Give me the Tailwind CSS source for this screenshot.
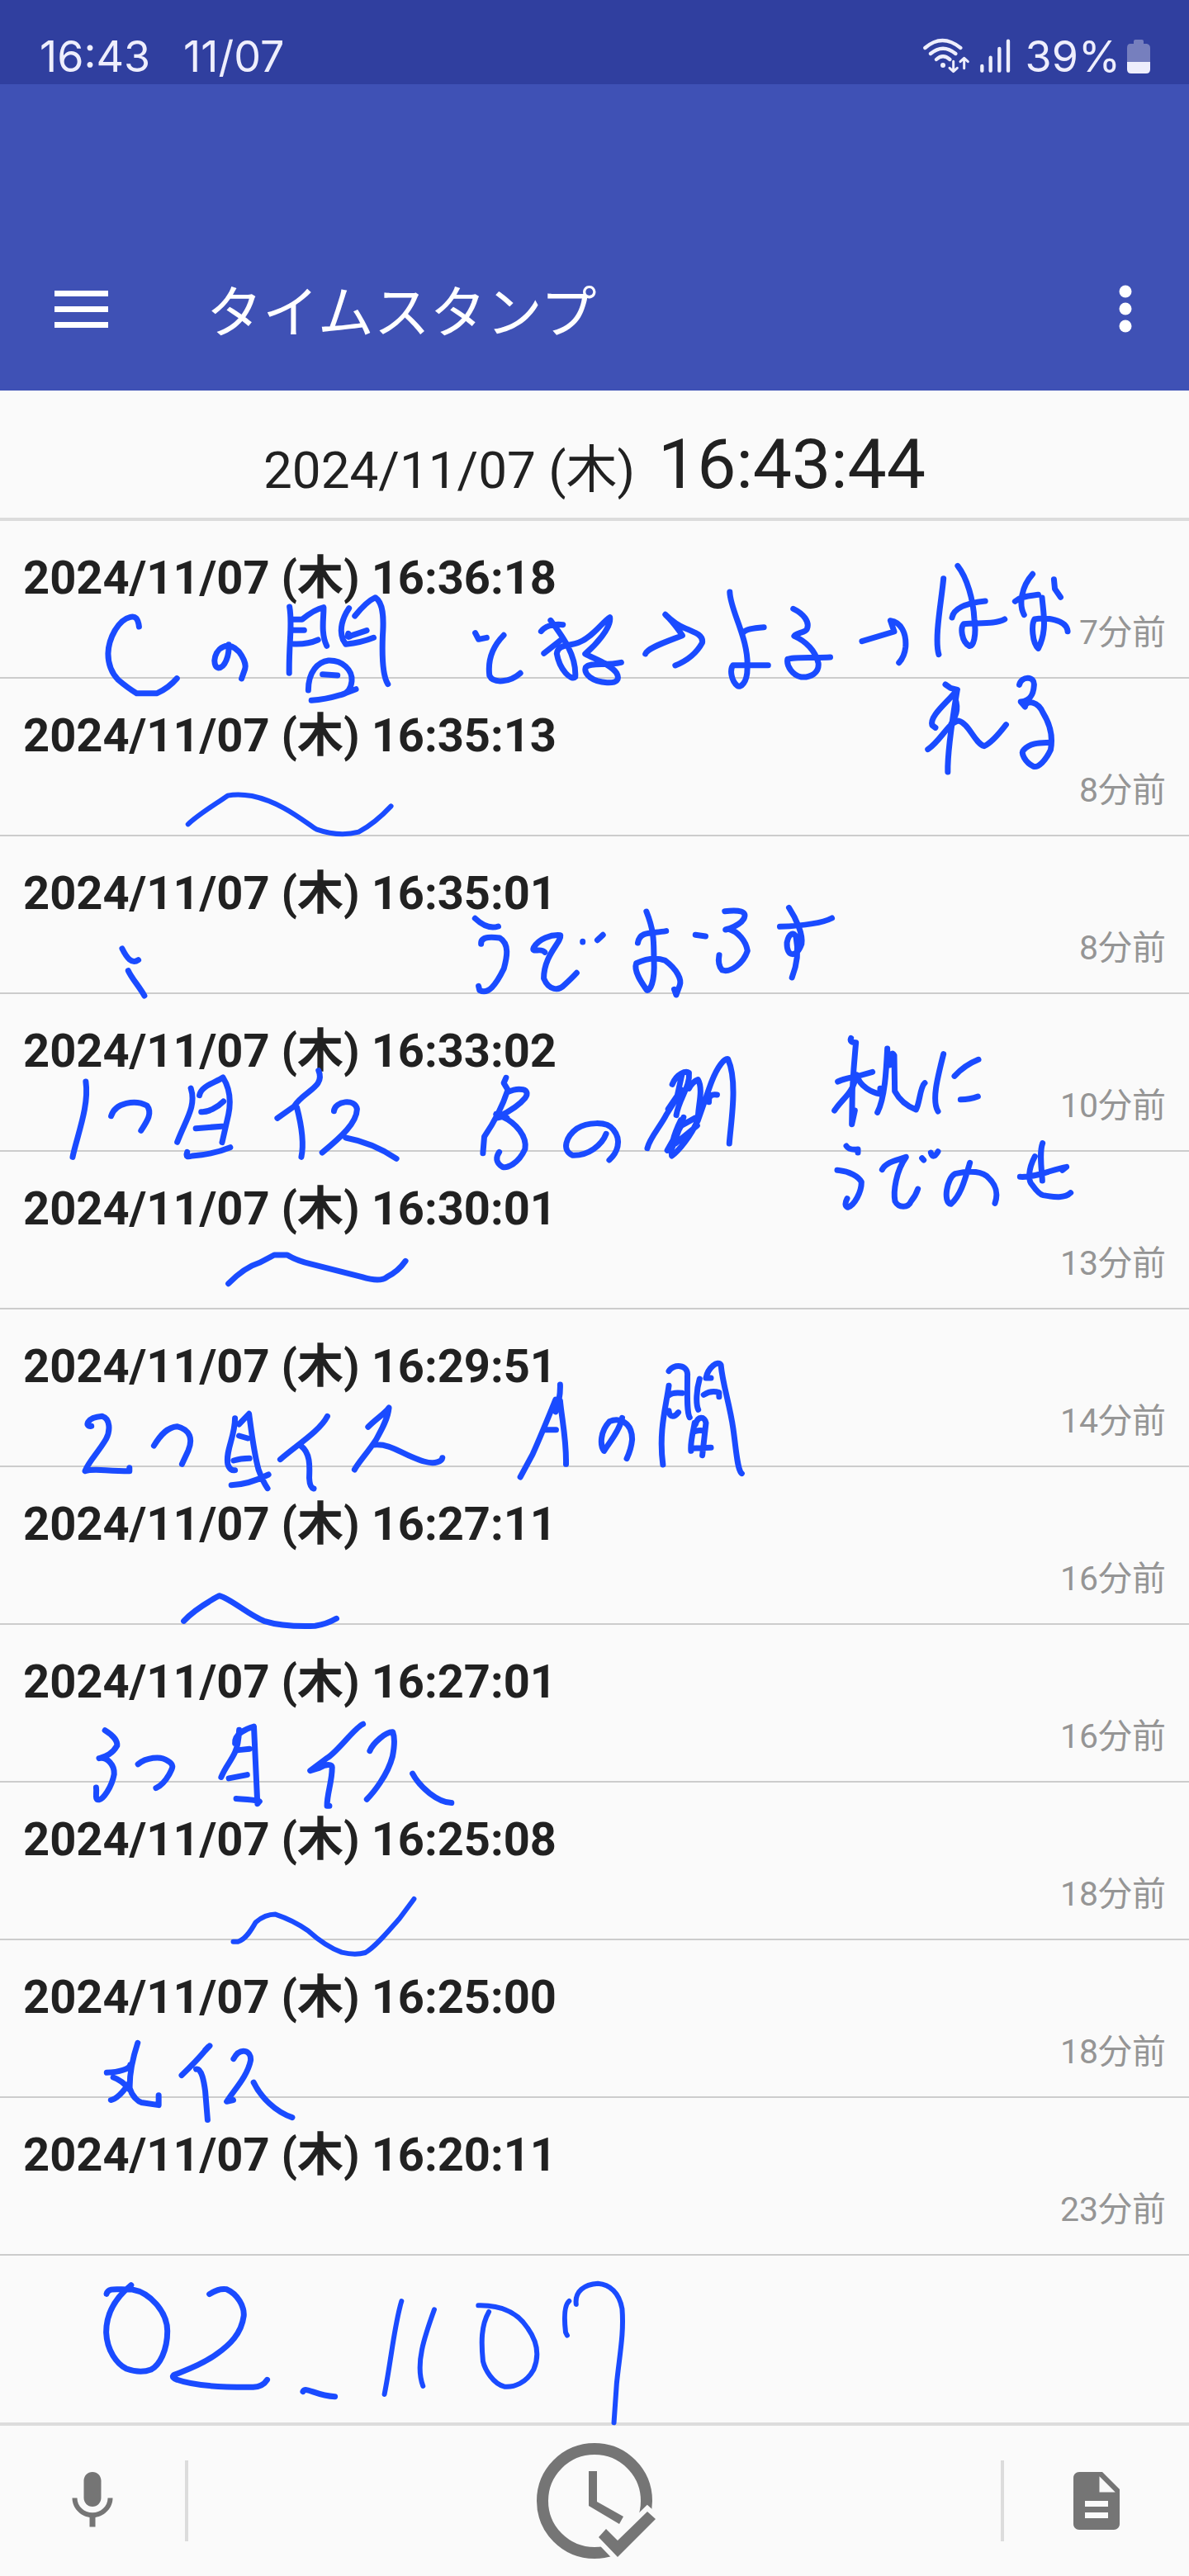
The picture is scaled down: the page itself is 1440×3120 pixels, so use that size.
<!DOCTYPE html>
<html lang="ja">
<head>
<meta charset="utf-8">
<meta name="viewport" content="width=device-width, initial-scale=1">
<title>タイムスタンプ</title>
<script src="https://cdn.jsdelivr.net/npm/@tailwindcss/browser@4"></script>
</head>
<body class="flex min-h-screen flex-col bg-[#fafafa] font-['Roboto','Noto_Sans_CJK_JP',sans-serif] text-[#212121]">

<!-- Status bar -->
<div class="flex h-[102px] items-end justify-between bg-[#303f9f] pr-[47px] pl-12 font-['Inter',sans-serif] text-[52px] leading-[66px] text-[#eeeefc]">
  <div class="flex gap-10"><span>16:43</span><span>11/07</span></div>
  <div class="flex items-end gap-4">
    <svg class="mb-3 h-[45px] w-[110px]" viewBox="105 75 330 135" fill="none" stroke="currentColor" stroke-linecap="round" stroke-linejoin="round" aria-hidden="true">
      <path stroke-width="13" d="M118 114Q180 60 247 114M138 135Q183 97 229 135M159 156Q183 134 208 156"/>
      <circle cx="183" cy="177" r="9" fill="currentColor" stroke="none"/>
      <path stroke-width="9" d="M221 163V199M207 187L221 200L235 187M260 188V152M246 164L260 151L274 164"/>
      <path stroke-width="13" d="M325 180V197M356 149V197M388 117V197M420 89V197"/>
    </svg>
    <span class="flex items-end gap-2"><span>39%</span>
    <svg class="mb-[13px] h-[42px] w-7" viewBox="0 0 28 42" aria-hidden="true">
      <path fill="#767fbe" d="M8 6V3Q8 1 10 1H18Q20 1 20 3V6H24Q28 7 28 11V29H0V11Q0 6 4 6Z"/>
      <path fill="#eeeefc" d="M0 28H28V37Q28 42 23 42H5Q0 42 0 37Z"/>
    </svg></span>
  </div>
</div>

<!-- App bar -->
<header class="flex h-[371px] items-end bg-[#3f51b5] text-white">
  <div class="flex h-[198px] w-full items-center pr-[49px] pl-14">
    <button type="button" aria-label="メニュー" class="flex h-[84px] w-[84px] items-center justify-center">
      <svg class="h-[45px] w-[65px]" viewBox="0 0 65 45" fill="currentColor"><path d="M0 0H65V7H0ZM0 19H65V26H0ZM0 38H65V45H0Z"/></svg>
    </button>
    <h1 class="ml-[110px] flex-1 pt-3 text-[68px] leading-[96px]">タイムスタンプ</h1>
    <button type="button" aria-label="その他" class="flex h-[84px] w-14 items-center justify-center">
      <svg class="h-[58px] w-4" viewBox="0 0 16 58" fill="currentColor"><circle cx="8" cy="8" r="7.5"/><circle cx="8" cy="29" r="7.5"/><circle cx="8" cy="50" r="7.5"/></svg>
    </button>
  </div>
</header>

<!-- Current time -->
<div class="flex h-[158px] items-baseline justify-center gap-7 border-b-4 border-[#dcdcdc] pt-[34px]">
  <span class="text-[62px] leading-[100px]">2024/11/07 (木)</span>
  <span class="text-[84px] leading-[112px]">16:43:44</span>
</div>

<!-- Time stamps -->
<main class="relative flex-1">
  <ul>
    <li class="border-b-2 border-[#cccccc] px-7 pt-[29px] pb-7"><p class="text-[56px] leading-[80px] font-bold">2024/11/07 (木) 16:36:18</p><p class="text-right text-[41px] leading-[52px] text-[#959595]">7分前</p></li>
    <li class="border-b-2 border-[#cccccc] px-7 pt-[29px] pb-7"><p class="text-[56px] leading-[80px] font-bold">2024/11/07 (木) 16:35:13</p><p class="text-right text-[41px] leading-[52px] text-[#959595]">8分前</p></li>
    <li class="border-b-2 border-[#cccccc] px-7 pt-[29px] pb-7"><p class="text-[56px] leading-[80px] font-bold">2024/11/07 (木) 16:35:01</p><p class="text-right text-[41px] leading-[52px] text-[#959595]">8分前</p></li>
    <li class="border-b-2 border-[#cccccc] px-7 pt-[29px] pb-7"><p class="text-[56px] leading-[80px] font-bold">2024/11/07 (木) 16:33:02</p><p class="text-right text-[41px] leading-[52px] text-[#959595]">10分前</p></li>
    <li class="border-b-2 border-[#cccccc] px-7 pt-[29px] pb-7"><p class="text-[56px] leading-[80px] font-bold">2024/11/07 (木) 16:30:01</p><p class="text-right text-[41px] leading-[52px] text-[#959595]">13分前</p></li>
    <li class="border-b-2 border-[#cccccc] px-7 pt-[29px] pb-7"><p class="text-[56px] leading-[80px] font-bold">2024/11/07 (木) 16:29:51</p><p class="text-right text-[41px] leading-[52px] text-[#959595]">14分前</p></li>
    <li class="border-b-2 border-[#cccccc] px-7 pt-[29px] pb-7"><p class="text-[56px] leading-[80px] font-bold">2024/11/07 (木) 16:27:11</p><p class="text-right text-[41px] leading-[52px] text-[#959595]">16分前</p></li>
    <li class="border-b-2 border-[#cccccc] px-7 pt-[29px] pb-7"><p class="text-[56px] leading-[80px] font-bold">2024/11/07 (木) 16:27:01</p><p class="text-right text-[41px] leading-[52px] text-[#959595]">16分前</p></li>
    <li class="border-b-2 border-[#cccccc] px-7 pt-[29px] pb-7"><p class="text-[56px] leading-[80px] font-bold">2024/11/07 (木) 16:25:08</p><p class="text-right text-[41px] leading-[52px] text-[#959595]">18分前</p></li>
    <li class="border-b-2 border-[#cccccc] px-7 pt-[29px] pb-7"><p class="text-[56px] leading-[80px] font-bold">2024/11/07 (木) 16:25:00</p><p class="text-right text-[41px] leading-[52px] text-[#959595]">18分前</p></li>
    <li class="border-b-2 border-[#cccccc] px-7 pt-[29px] pb-7"><p class="text-[56px] leading-[80px] font-bold">2024/11/07 (木) 16:20:11</p><p class="text-right text-[41px] leading-[52px] text-[#959595]">23分前</p></li>
  </ul>

  <!-- Pen notes written over the list -->
  <svg class="pointer-events-none absolute inset-x-0 top-0 w-full overflow-visible [&_path]:[vector-effect:non-scaling-stroke]" viewBox="0 631 1440 2303" fill="none" stroke="#1a4bff" stroke-width="7" stroke-linecap="round" stroke-linejoin="round" aria-hidden="true">
    <g transform="translate(80 660) scale(.42092 .33333)">
      <path d="M210 297C207 265 199 258 185 262C150 272 122 340 121 395C121 440 135 470 150 490Q178 520 203 539H262Q295 520 319 485"/>
      <path d="M468 362C470 400 458 446 438 447C418 440 425 370 466 366C500 370 520 430 515 450L505 486"/>
      <path d="M643 225C652 290 641 350 642 466M655 271H679Q715 234 741 227C742 260 732 320 750 367M655 310H685M655 360Q695 362 725 345"/>
      <path d="M814 230C795 265 785 310 797 345L805 361Q850 355 885 337M812 322C808 335 812 338 822 329L865 311M831 258Q865 205 890 191C912 210 915 260 911 330C908 430 913 480 926 506"/>
      <path d="M697 528C697 460 725 425 755 420C795 418 825 455 822 495Q818 540 790 545Q745 562 706 565M790 545L834 524M738 470L781 474"/>
      <path stroke-width="6" d="M351 1015C380 980 420 950 465 911Q495 903 535 912C620 935 680 1000 720 1033Q785 1062 842 1043Q890 1010 935 949"/>
    </g>
    <g transform="translate(540 660) scale(.57398 .33333)">
      <path d="M62 320L69 343L86 337M122 328C98 370 88 420 92 475C100 505 135 500 157 466"/>
      <path d="M201 314C207 298 225 285 247 290M221 274C245 330 276 400 273 480C265 495 240 455 234 395C236 360 260 368 280 355C310 335 330 280 346 263C350 300 315 365 294 396C310 412 345 430 360 465C368 490 360 502 340 500C310 498 290 470 295 445C305 425 335 440 370 427M207 394L243 345"/>
      <path d="M421 396C425 375 460 355 499 329Q480 280 463 253Q485 290 505 303C530 320 543 330 541 355C530 390 510 420 484 438"/>
      <path d="M599 171C600 240 640 340 636 450C636 500 622 520 615 512C603 495 598 455 606 437H680M625 324C630 305 650 302 671 299"/>
      <path d="M733 232C755 250 768 280 762 305C758 320 740 318 735 331C760 350 780 385 786 430C788 465 770 482 750 480C732 475 718 440 721 415C735 405 780 412 811 408"/>
      <path d="M878 350L946 315L938 275C960 280 972 320 970 370Q968 405 956 428"/>
      <path d="M1050 122C1046 200 1030 340 1040 398M1080 76C1100 120 1113 200 1115 270C1120 330 1113 372 1104 367C1088 350 1085 300 1093 287C1120 282 1160 290 1179 270M1068 264C1072 225 1105 210 1138 204"/>
      <path d="M1238 106C1215 150 1208 215 1220 254M1201 205C1215 185 1235 185 1250 181M1283 125L1285 160L1297 190M1258 192C1260 240 1270 310 1250 376C1237 355 1235 290 1242 270C1265 262 1310 270 1312 314"/>
      <path d="M1054 507L1065 520L1079 526C1072 600 1058 740 1059 825M1079 526C1060 570 1020 620 1026 655L1033 664M1017 743C1045 710 1060 645 1082 639C1105 650 1115 720 1136 731C1150 720 1170 680 1182 653M1075 560C1085 610 1068 640 1065 655"/>
      <path d="M1210 508C1215 475 1243 475 1241 510C1240 540 1235 565 1213 570L1222 588C1225 560 1250 570 1260 610C1278 660 1280 710 1276 745C1265 785 1250 810 1240 805C1222 790 1212 755 1219 745C1235 715 1260 720 1276 718"/>
    </g>
    <g transform="translate(80 1060) scale(.61224 .33333)">
      <path d="M111 267C120 300 130 325 143 308M123 347C130 375 145 405 155 438"/>
      <path d="M809 157C825 185 840 195 855 186M821 250C820 220 845 225 858 228C878 250 872 300 866 340C850 400 835 435 818 418L816 403"/>
      <path d="M947 280C940 262 920 285 925 263C935 230 960 215 978 218C980 245 945 290 945 375C955 420 975 420 985 400Q1000 375 1010 355M1022 241V243M1051 236L1062 217"/>
      <path d="M1148 132C1165 210 1162 250 1163 310C1165 390 1155 420 1149 418C1140 395 1122 350 1128 320C1145 305 1165 295 1185 310C1210 345 1218 380 1214 400L1207 435L1203 415M1131 246C1135 200 1160 213 1187 203"/>
      <path d="M1245 217L1265 222M1303 131C1330 125 1350 130 1340 160C1330 190 1290 205 1310 195C1330 205 1345 240 1348 275C1340 320 1315 355 1298 345C1290 330 1290 310 1292 290"/>
      <path d="M1430 118C1445 160 1458 215 1455 250C1445 300 1425 300 1426 245C1430 210 1440 205 1444 225C1450 280 1445 330 1436 372M1412 187C1440 185 1490 180 1515 156"/>
    </g>
    <g transform="translate(60 1260) scale(.54847 .33333)">
      <path d="M80 150C88 240 60 350 51 424M136 275C145 225 190 215 215 237C228 265 215 295 202 328"/>
      <path d="M312 174C325 240 300 290 282 370M331 200C335 165 365 155 383 135C400 180 400 230 395 270L381 371M335 260C350 262 370 245 384 222M323 320L386 312M304 406C300 425 305 425 315 420Q360 415 399 389"/>
      <path d="M594 110C610 170 560 185 540 240L503 283M546 243C555 300 563 370 556 424M628 257C630 220 675 210 679 250C678 300 645 350 602 408M654 354C690 365 730 390 766 430"/>
      <path d="M1008 136L1003 155L1012 180C1000 240 985 290 960 350L957 410M1012 188C1035 170 1065 175 1050 210C1030 250 1000 270 985 283L1000 278C1030 300 1055 350 1050 395C1035 450 1010 465 1000 460C985 445 985 425 993 406M986 268L1010 282"/>
      <path d="M1229 340C1220 380 1190 420 1155 418C1130 400 1140 350 1165 320C1185 300 1230 290 1245 325C1265 365 1253 410 1236 435"/>
      <path d="M1320 392C1325 355 1350 310 1362 270L1385 210L1397 120M1375 160C1385 120 1405 110 1412 118C1415 170 1390 210 1384 272M1366 250L1395 180M1412 175Q1420 150 1432 143C1445 180 1430 250 1432 290C1415 350 1390 400 1374 420C1370 380 1385 320 1394 290M1364 400L1395 310L1427 281M1382 375L1430 310M1400 280L1375 390M1432 290C1445 230 1455 180 1462 150C1475 95 1490 65 1498 68C1520 150 1505 290 1501 375M1456 224C1455 200 1463 195 1474 198"/>
      <path d="M395 884C415 850 440 820 465 807L496 780H525Q545 800 575 812L690 860Q730 880 745 860Q770 840 786 802"/>
    </g>
    <g transform="translate(960 1230) scale(.33333 .33333)">
      <path d="M212 82Q205 98 230 98Q222 180 217 270L215 395L226 345M164 240Q190 228 230 222L290 205M152 345C190 290 215 290 232 215C245 260 290 280 318 285V265M308 352C335 300 340 200 344 120V180M352 180C355 140 362 130 369 145L371 275C395 320 430 335 448 342C462 320 462 260 480 245M548 140C525 230 505 310 528 348M588 220Q625 180 675 160M610 305Q645 305 673 294"/>
      <path d="M195 474Q205 490 237 486V498M162 562C205 565 240 585 250 605C250 640 225 690 200 697Q185 690 198 665"/>
      <path d="M325 560C340 530 385 525 412 514C375 565 365 640 372 675C385 700 420 700 430 675Q447 655 455 630M470 518L476 525M502 498Q510 525 528 494"/>
      <path d="M644 535C625 600 610 655 575 685C545 680 560 590 590 575C635 565 680 565 705 583C735 610 750 640 735 682M908 464C895 500 905 560 907 600M826 586C880 590 940 560 995 550L980 562M880 512C855 560 855 600 870 615Q895 650 910 653C950 660 990 665 1010 644"/>
    </g>
    <g transform="translate(80 1620) scale(.54847 .33333)">
      <path d="M56 322C40 325 45 290 80 286C98 295 98 340 88 370C70 420 50 450 42 485C60 475 85 485 140 485V473M194 393C210 350 225 325 245 323C275 335 280 370 270 410L256 460"/>
      <path d="M373 293C373 360 352 410 357 460Q362 485 373 482M382 315L404 277C410 350 415 420 425 480Q435 525 445 548M382 357L401 366M370 447Q385 440 405 439M365 536C395 535 420 520 447 498"/>
      <path d="M577 286C560 340 510 390 473 443M519 394C540 420 538 470 537 510Q538 545 547 549M667 325C685 295 705 275 713 255C710 300 695 340 685 370C665 420 645 455 637 480M680 390C720 385 740 425 790 450C815 462 830 450 831 437"/>
      <path d="M1091 171Q1092 220 1081 270V225C1065 290 1045 370 1030 425L1003 507M1091 230C1095 300 1105 370 1104 460M1058 335H1082M1228 292C1222 340 1200 380 1188 412C1178 390 1180 340 1200 305C1220 290 1250 305 1250 370Q1248 405 1238 440"/>
      <path d="M1331 122C1340 95 1375 95 1372 140C1372 200 1370 270 1377 290M1331 175C1325 250 1308 340 1318 462M1331 210Q1340 198 1360 202M1331 266C1333 295 1345 288 1352 272M1399 150C1392 190 1390 240 1396 262M1413 147H1424M1413 147C1417 110 1440 80 1446 100C1450 170 1465 240 1473 330C1480 410 1482 480 1492 494M1408 208Q1425 190 1442 200V215M1388 310C1385 340 1378 380 1380 412M1390 315C1395 285 1410 285 1413 310L1405 428M1390 340Q1400 335 1411 340M1382 403L1424 400"/>
      <path d="M260 1030C285 985 320 955 338 938C365 950 400 1005 437 1030Q480 1052 550 1048Q575 1042 597 1021"/>
    </g>
    <g transform="translate(80 2040) scale(.35714 .35714)">
      <path d="M132 156C155 170 175 190 173 208C155 240 130 245 112 251C140 245 165 275 163 305C155 350 125 390 113 391C95 395 105 370 102 350M244 271C270 250 320 240 345 260C370 275 360 285 350 305Q330 340 305 352"/>
      <path d="M587 155C585 200 580 215 573 230C560 260 540 280 526 315M573 200C570 170 610 150 637 143L649 405L656 397C635 390 610 390 577 388M585 223L622 219M552 319L614 307"/>
      <path d="M1007 135C980 145 920 230 885 250L828 293L860 283C880 270 905 268 902 285C902 330 885 370 885 412H893M1030 226C1040 200 1085 160 1108 162C1115 180 1113 215 1107 245C1090 310 1040 370 1020 390M1175 303C1200 350 1260 400 1307 402"/>
      <path stroke-width="6" d="M567 873H582C610 865 630 830 643 807Q675 780 710 780Q770 800 820 835C870 880 910 900 935 909Q980 920 1015 910C1050 890 1090 840 1130 795L1180 728"/>
      <path d="M243 1216C222 1280 215 1330 216 1370C225 1400 245 1415 255 1418L314 1427V1394M138 1317C180 1315 215 1305 218 1290M160 1333C180 1340 200 1355 216 1375M152 1410C175 1405 195 1380 212 1355"/>
      <path d="M487 1226L472 1242Q440 1280 392 1326M472 1240L482 1230M441 1305C460 1300 468 1350 472 1380L480 1477M568 1270C590 1230 628 1240 626 1275C615 1330 570 1375 545 1415L567 1410M636 1350C660 1400 710 1450 767 1469"/>
    </g>
    <g transform="translate(80 2720) scale(.47194 .33333)">
      <path d="M104 175C108 150 130 160 170 159M167 143C130 185 103 240 103 315C105 380 130 430 155 447Q190 465 218 450C240 435 260 380 260 310C260 240 215 170 170 159"/>
      <path d="M368 176C385 160 400 155 412 158C440 175 458 220 456 255C450 320 420 360 385 395C340 440 300 455 276 470Q270 480 285 487C330 510 400 515 480 514Q505 512 516 487M608 530C615 510 640 545 690 548"/>
      <path stroke-width="6" d="M861 201C842 290 835 410 817 540M945 232C920 330 895 430 916 510"/>
      <path stroke-width="6" d="M1058 217C1120 215 1160 245 1185 300C1210 350 1215 400 1200 450C1180 500 1150 515 1125 512C1095 500 1075 450 1070 420C1065 350 1065 290 1085 240M1291 201C1275 220 1280 290 1282 315L1286 326M1309 213C1305 165 1330 140 1365 137C1395 140 1420 170 1427 230C1432 320 1420 400 1413 500L1406 643"/>
    </g>
  </svg>
</main>

<!-- Bottom bar -->
<footer class="flex h-[186px] items-center border-t-4 border-[#dcdcdc] text-[#757575]">
  <button type="button" aria-label="音声入力" class="flex h-[98px] w-56 items-center justify-center">
    <svg class="h-[84px] w-[84px]" viewBox="0 0 24 24" fill="currentColor"><path d="M12 14c1.66 0 2.99-1.34 2.99-3L15 5c0-1.66-1.34-3-3-3S9 3.340 9 5v6c0 1.660 1.340 3 3 3zm5.300-3c0 3-2.540 5.100-5.300 5.100S6.700 14 6.700 11H5c0 3.410 2.720 6.230 6 6.720V21h2v-3.280c3.280-.480 6-3.300 6-6.720h-1.700z"/></svg>
  </button>
  <button type="button" aria-label="時刻を記録" class="flex h-[98px] flex-1 items-center justify-center border-x-4 border-[#dcdcdc]">
    <svg class="h-[140px] w-[140px] shrink-0 overflow-visible" viewBox="0 0 140 140" fill="currentColor">
      <circle cx="70" cy="70" r="63" fill="none" stroke="currentColor" stroke-width="14"/>
      <path d="M63 34H73V71L105 89L100 98L63 76Z"/>
      <path d="M134 83L144 92L98 138L75 114L84 104L98 118Z" stroke="#fafafa" stroke-width="12"/>
      <path d="M134 83L144 92L98 138L75 114L84 104L98 118Z"/>
    </svg>
  </button>
  <button type="button" aria-label="メモ一覧" class="flex h-[98px] w-56 items-center justify-center">
    <svg class="h-[84px] w-[84px]" viewBox="0 0 24 24" fill="currentColor"><path d="M14 2H6c-1.100 0-1.990.900-1.990 2L4 20c0 1.100.890 2 1.990 2H18c1.100 0 2-.900 2-2V8l-6-6zm2 16H8v-2h8v2zm0-4H8v-2h8v2zm-3-5V3.500L18.500 9H13z"/></svg>
  </button>
</footer>
</body>
</html>
